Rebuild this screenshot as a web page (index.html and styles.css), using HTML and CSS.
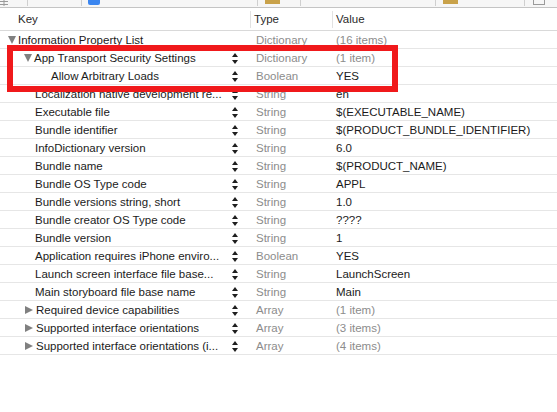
FILE: index.html
```html
<!DOCTYPE html>
<html>
<head>
<meta charset="utf-8">
<link rel="stylesheet" href="styles.css">
</head>
<body>
<div class="app">
  <div class="toolbar">
    <svg class="tb-grid" width="8" height="6" viewBox="0 0 8 6"><path d="M0 1.5H8M0 4.5H8M4 0V6" stroke="#9a9a9a" stroke-width="1"/></svg>
    <span class="tb-sep s1"></span>
    <span class="tb-sep s2"></span>
    <span class="tb-blue"></span>
    <span class="tb-sep s3"></span>
    <span class="tb-gold g1"></span>
    <span class="tb-sep s4"></span>
    <span class="tb-sep s5"></span>
    <span class="tb-gold g2"></span>
    <span class="tb-sep s6"></span>
    <span class="tb-box"></span>
  </div>
  <div class="table">
    <div class="header">
      <div class="hcell hkey">Key</div>
      <div class="hcell htype">Type</div>
      <div class="hcell hval">Value</div>
    </div>
    <div class="rows">
      <div class="row"><div class="key l0"><span class="tri down"></span>Information Property List</div><div class="type">Dictionary</div><div class="val dim">(16 items)</div></div>
      <div class="row"><div class="key l1"><span class="tri down"></span>App Transport Security Settings<span class="step"></span></div><div class="type">Dictionary</div><div class="val dim">(1 item)</div></div>
      <div class="row"><div class="key l2">Allow Arbitrary Loads<span class="step"></span></div><div class="type">Boolean</div><div class="val">YES</div></div>
      <div class="row"><div class="key l1n">Localization native development re...<span class="step"></span></div><div class="type">String</div><div class="val">en</div></div>
      <div class="row"><div class="key l1n">Executable file<span class="step"></span></div><div class="type">String</div><div class="val">$(EXECUTABLE_NAME)</div></div>
      <div class="row"><div class="key l1n">Bundle identifier<span class="step"></span></div><div class="type">String</div><div class="val">$(PRODUCT_BUNDLE_IDENTIFIER)</div></div>
      <div class="row"><div class="key l1n">InfoDictionary version<span class="step"></span></div><div class="type">String</div><div class="val">6.0</div></div>
      <div class="row"><div class="key l1n">Bundle name<span class="step"></span></div><div class="type">String</div><div class="val">$(PRODUCT_NAME)</div></div>
      <div class="row"><div class="key l1n">Bundle OS Type code<span class="step"></span></div><div class="type">String</div><div class="val">APPL</div></div>
      <div class="row"><div class="key l1n">Bundle versions string, short<span class="step"></span></div><div class="type">String</div><div class="val">1.0</div></div>
      <div class="row"><div class="key l1n">Bundle creator OS Type code<span class="step"></span></div><div class="type">String</div><div class="val">????</div></div>
      <div class="row"><div class="key l1n">Bundle version<span class="step"></span></div><div class="type">String</div><div class="val">1</div></div>
      <div class="row"><div class="key l1n">Application requires iPhone enviro...<span class="step"></span></div><div class="type">Boolean</div><div class="val">YES</div></div>
      <div class="row"><div class="key l1n">Launch screen interface file base...<span class="step"></span></div><div class="type">String</div><div class="val">LaunchScreen</div></div>
      <div class="row"><div class="key l1n">Main storyboard file base name<span class="step"></span></div><div class="type">String</div><div class="val">Main</div></div>
      <div class="row"><div class="key l1"><span class="tri right"></span>Required device capabilities<span class="step"></span></div><div class="type">Array</div><div class="val dim">(1 item)</div></div>
      <div class="row"><div class="key l1"><span class="tri right"></span>Supported interface orientations<span class="step"></span></div><div class="type">Array</div><div class="val dim">(3 items)</div></div>
      <div class="row"><div class="key l1"><span class="tri right"></span>Supported interface orientations (i...<span class="step"></span></div><div class="type">Array</div><div class="val dim">(4 items)</div></div>
    </div>
  </div>
  <div class="highlight"></div>
</div>
</body>
</html>
```

FILE: styles.css
```css
* { box-sizing: border-box; }
html, body { margin: 0; padding: 0; background: #fff; }
body {
  font-family: "Liberation Sans", Arial, sans-serif;
  font-size: 11.5px;
  color: #1b1b1b;
}
.app { position: relative; width: 557px; height: 412px; overflow: hidden; background: #fff; }

.toolbar {
  position: relative;
  height: 8px;
  border-bottom: 1px solid #c4c4c4;
  background: #f6f6f6;
}
.toolbar > * { position: absolute; top: 0; }
.tb-grid { left: 0; top: 0; }
.tb-sep { width: 1px; height: 6px; background: #cfcfcf; }
.s1 { left: 27px; } .s2 { left: 81px; } .s3 { left: 257px; }
.s4 { left: 300px; } .s5 { left: 435px; } .s6 { left: 524px; }
.tb-blue { left: 88px; width: 12px; height: 5px; background: #3b86f0; border-radius: 0 0 2px 2px; }
.tb-gold { width: 15px; height: 4px; background: #c9a24a; }
.g1 { left: 265px; } .g2 { left: 443px; }
.tb-box { left: 533px; width: 12px; height: 5px; border: 1px solid #9a9a9a; border-top: none; }

.header {
  display: grid;
  grid-template-columns: 250px 82px 1fr;
  height: 23px;
  border-bottom: 1px solid #d9d9d9;
  align-items: center;
  color: #2a2a2a;
}
.hcell { height: 100%; display: flex; align-items: center; }
.hkey { padding-left: 18px; }
.htype, .hval { border-left: 1px solid #e2e2e2; padding-left: 3px; height: 17px; }

.row {
  display: grid;
  grid-template-columns: 250px 82px 1fr;
  height: 18px;
  border-bottom: 1px solid #e6e6e6;
  align-items: center;
}
.key { position: relative; display: flex; align-items: center; height: 100%; white-space: nowrap; }
.l0 { padding-left: 8px; }
.l1 { padding-left: 24px; }
.l1n { padding-left: 35px; }
.l2 { padding-left: 51px; }
.type { color: #8c8c8c; padding-left: 6px; }
.val { padding-left: 4px; }
.val.dim { color: #8c8c8c; }

.tri { display: inline-block; width: 0; height: 0; margin-right: 2px; }
.tri.down {
  border-left: 4.5px solid transparent;
  border-right: 4.5px solid transparent;
  border-top: 8px solid #808080;
  margin-right: 2px;
}
.tri.right {
  border-top: 4.5px solid transparent;
  border-bottom: 4.5px solid transparent;
  border-left: 8px solid #808080;
  margin-left: 1px;
  margin-right: 3px;
}
.step {
  position: absolute;
  left: 232px;
  top: 4px;
  width: 7px;
  height: 11px;
}
.step::before, .step::after {
  content: "";
  position: absolute;
  left: 0;
  border-left: 3.5px solid transparent;
  border-right: 3.5px solid transparent;
}
.step::before { top: 0; border-bottom: 4px solid #1e1e1e; }
.step::after { bottom: 0; border-top: 4px solid #1e1e1e; }

.highlight {
  position: absolute;
  left: 7px;
  top: 45px;
  width: 391px;
  height: 47px;
  border: 6px solid #f0191b;
}
```
